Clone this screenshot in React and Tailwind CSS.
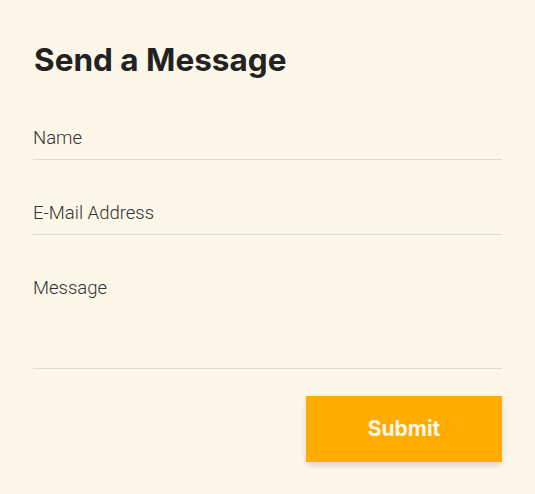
export default function App() {
  return (
    <div className="min-h-screen bg-[#fdf7ea] px-[33px] pt-[40px] font-['Roboto',sans-serif]">
      <h2 className="text-[31.5px] leading-[40px] font-bold text-[#222] font-['Inter',sans-serif] pl-px">
        Send a Message
      </h2>

      <form className="flex flex-col">
        <input
          type="text"
          placeholder="Name"
          className="block w-full bg-transparent border-b border-[#dedbd1] pt-[46px] pb-[9px] text-[18.5px] leading-[24px] font-light text-[#333] placeholder:text-[#333] outline-none"
        />
        <input
          type="email"
          placeholder="E-Mail Address"
          className="block w-full bg-transparent border-b border-[#dedbd1] pt-[41px] pb-[9px] text-[18.5px] leading-[24px] font-light text-[#333] placeholder:text-[#333] outline-none"
        />
        <textarea
          placeholder="Message"
          className="block w-full h-[134px] resize-none bg-transparent border-b border-[#dedbd1] pt-[41px] pb-[9px] text-[18.5px] leading-[24px] font-light text-[#333] placeholder:text-[#333] outline-none"
        />

        <div className="flex justify-end mt-[27px]">
          <button
            type="submit"
            className="w-[196px] h-[66px] bg-[#ffab00] text-[#fdf7ea] text-[21px] font-bold font-['Inter',sans-serif] shadow-[0_3px_6px_rgba(0,0,0,0.15)]"
          >
            Submit
          </button>
        </div>
      </form>
    </div>
  );
}
